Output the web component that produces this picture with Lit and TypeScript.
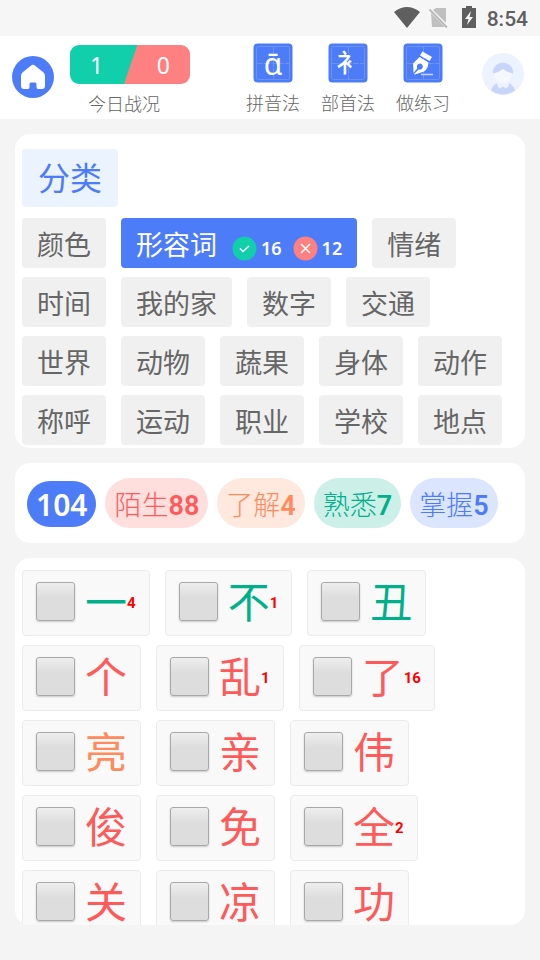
import { LitElement, html, svg, css, nothing } from "lit";
import { customElement } from "lit/decorators.js";
import { classMap } from "lit/directives/class-map.js";

type Category = { name: string; right?: number; wrong?: number };
type Level = "fresh" | "known" | "familiar" | "mastered";
type Word = { char: string; level: Level; misses?: number };

const categories: Category[] = [
  { name: "颜色" }, { name: "形容词", right: 16, wrong: 12 }, { name: "情绪" },
  { name: "时间" }, { name: "我的家" }, { name: "数字" }, { name: "交通" },
  { name: "世界" }, { name: "动物" }, { name: "蔬果" }, { name: "身体" }, { name: "动作" },
  { name: "称呼" }, { name: "运动" }, { name: "职业" }, { name: "学校" }, { name: "地点" },
];

const levels: { name: string; count: number; level: Level }[] = [
  { name: "陌生", count: 88, level: "fresh" },
  { name: "了解", count: 4, level: "known" },
  { name: "熟悉", count: 7, level: "familiar" },
  { name: "掌握", count: 5, level: "mastered" },
];

const words: Word[] = [
  { char: "一", level: "familiar", misses: 4 },
  { char: "不", level: "familiar", misses: 1 },
  { char: "丑", level: "familiar" },
  { char: "个", level: "fresh" },
  { char: "乱", level: "fresh", misses: 1 },
  { char: "了", level: "fresh", misses: 16 },
  { char: "亮", level: "known" },
  { char: "亲", level: "fresh" },
  { char: "伟", level: "fresh" },
  { char: "俊", level: "fresh" },
  { char: "免", level: "fresh" },
  { char: "全", level: "fresh", misses: 2 },
  { char: "关", level: "fresh" },
  { char: "凉", level: "fresh" },
  { char: "功", level: "fresh" },
];

const penIcon = svg`
  <path d="M19.500 8.500 L29 14 L26.500 18 L17 12.500 Z" fill="#fff"/>
  <path fill-rule="evenodd" fill="#fff" d="M16.500 14 L25.500 19.500 Q25 26 21 28.500 L12 31.500 L11 31 L15.700 26.400 A3 3 0 1 0 14.300 25.200 L10.500 30 Q10.500 25 10 20.500 Z"/>
  <path d="M18 31.500 H30" stroke="#c9d6ff" stroke-width="1.500"/>`;

@customElement("app-root")
export class AppRoot extends LitElement {
  static styles = css`
    :host {
      display: flex;
      flex-direction: column;
      height: 100vh;
      box-sizing: border-box;
      padding-bottom: 35px;
      background: #f4f4f4;
      color: #666;
      font-family: Roboto, "Noto Sans CJK SC", sans-serif;
    }
    * { box-sizing: border-box; }
    svg { display: block; }
    button { border: 0; margin: 0; padding: 0; background: none; color: inherit; font: inherit; cursor: pointer; }
    .status {
      display: flex; flex: none; align-items: center; justify-content: flex-end; gap: 10px;
      height: 36px; padding: 2px 12px 0 0; background: #f6f6f6;
      color: #5f5f5f; font-size: 21px; font-weight: 500;
    }
    .status svg { flex: none; margin-bottom: 2px; }
    .header {
      display: flex; flex: none; align-items: flex-start;
      height: 83px; padding: 0 16px 0 12px; background: #fff;
    }
    .home { margin-top: 20px; }
    .today { display: flex; flex-direction: column; align-items: center; margin: 9px 0 0 16px; }
    .score {
      display: flex; align-items: center; justify-content: space-between;
      width: 120px; height: 39px; padding: 0 20px; border-radius: 9px;
      background: linear-gradient(109deg, #11cfab 50%, #ff8080 51%);
      color: #fff; font: 23px "Noto Sans", sans-serif;
    }
    .caption { font-size: 18px; font-weight: 300; line-height: 26px; }
    .today .caption { margin-top: 8px; margin-right: 12px; }
    .tools { display: flex; margin: 7px 32px 0 auto; gap: 21px; }
    .tool { display: flex; flex-direction: column; align-items: center; width: 54px; white-space: nowrap; }
    .tool .caption { margin-top: 8px; }
    .glyph { fill: #fff; font-family: "Noto Sans", "Noto Sans CJK SC", sans-serif; }
    .avatar { margin-top: 17px; }
    .card { flex: none; margin: 15px 15px 0; border-radius: 15px; background: #fff; }
    .categories { padding: 15px 7px 3px; }
    .title {
      display: inline-block; margin: 0 0 11px; padding: 2px 16px 0; border-radius: 4px;
      background: #eaf3ff; color: #4d7cf8; font-size: 32px; font-weight: 400; line-height: 56px;
      vertical-align: top;
    }
    .chips { display: flex; flex-wrap: wrap; gap: 9px 15px; }
    .chip {
      display: flex; align-items: center; height: 50px; padding: 0 15px; border-radius: 4px;
      background: #f0f0f0; font-size: 27px;
    }
    .chip.active { background: #4d7cf8; color: #fff; }
    .tally {
      display: flex; align-items: center; gap: 4px; margin: 10px 0 0 15px;
      font: 600 18px "Noto Sans", sans-serif;
    }
    .tally + .tally { margin-left: 11px; }
    .levels { display: flex; align-items: center; gap: 9px; height: 80px; padding: 0 12px; }
    .level { height: 50px; padding: 0 9px; border-radius: 25px; font-size: 27px; font-weight: 300; white-space: nowrap; }
    .level b { font-weight: 600; }
    .level.total { height: 46px; margin-top: 2px; background: #4d7cf8; color: #fff; font: 600 30px "Noto Sans", sans-serif; }
    .fresh { color: #ff5a5a; }
    .known { color: #ff8a5c; }
    .familiar { color: #00b08b; }
    .mastered { color: #4d7cf8; }
    .level.fresh { background: #ffdede; }
    .level.known { background: #ffe8de; }
    .level.familiar { background: #ccefe8; }
    .level.mastered { background: #dbe5fe; }
    .words {
      display: flex; flex: 1 1 0; flex-wrap: wrap; align-content: flex-start; gap: 9px 15px;
      min-height: 0; padding: 12px 7px 0; overflow: hidden;
    }
    .word {
      display: flex; align-items: center; height: 66px; padding: 0 13px;
      border: 1px solid #ebebeb; border-radius: 4px; background: #f9f9f9;
    }
    .box {
      appearance: none; width: 39px; height: 39px; margin: 0 10px 4px 0;
      border: 1px solid #a8a8a8; border-radius: 3px;
      background: linear-gradient(#eee, #ddd 40%); box-shadow: 0 1px 2px #0003;
    }
    .box:checked { background: #4d7cf8; }
    .char { padding-top: 2px; font-size: 42px; line-height: 60px; }
    .misses { color: #f00; font-size: 15px; font-weight: 700; }
  `;

  private tool(label: string, content: unknown) {
    return html`<button class="tool">
      <svg width="40" height="40" viewBox="0 0 40 40" aria-hidden="true">
        <rect x=".5" y=".5" width="39" height="39" rx="4" fill="#4d7cf8"/>
        <rect x="3.500" y="3.500" width="33" height="33" rx="2" fill="none" stroke="#6c91fa"/>
        <path d="M4 20.500 H36 M20.500 4 V36" stroke="#6c91fa" stroke-dasharray="6 1"/>
        ${content}
      </svg>
      <span class="caption">${label}</span>
    </button>`;
  }

  private category(c: Category) {
    return html`<button class=${classMap({ chip: true, active: c.right !== undefined })}>
      ${c.name}${c.right === undefined ? nothing : html`
        <span class="tally"><svg width="25" height="25" viewBox="0 0 25 25" aria-hidden="true">
          <circle cx="12.500" cy="12.500" r="12" fill="#11cfab"/>
          <path d="M8 12.500 L11 15.500 L17 10" fill="none" stroke="#fff" stroke-width="1.500"/>
        </svg>${c.right}</span>
        <span class="tally"><svg width="25" height="25" viewBox="0 0 25 25" aria-hidden="true">
          <circle cx="12.500" cy="12.500" r="12" fill="#ff8080"/>
          <path d="M8 8 L17 17 M17 8 L8 17" stroke="#fff" stroke-width="1.500"/>
        </svg>${c.wrong}</span>`}
    </button>`;
  }

  render() {
    return html`
      <div class="status">
        <svg width="83" height="24" viewBox="0 0 83 24" aria-hidden="true">
          <path d="M0 6 Q13 -4 26 6 L13 22 Z" fill="#5f5f5f"/>
          <path d="M42 2 H52 V17 L39 4 Z M37 7 L51 21 H38 Z" fill="#c0c0c0"/>
          <path d="M35.500 3.500 L53 21.500" stroke="#b8b8b8" stroke-width="1.800"/>
          <path fill-rule="evenodd" fill="#5f5f5f" d="M72 0 H78 V2 H82 V22 H68 V2 H72 Z M77 5 L71 13 H74.500 L73 19 L79 11 H75.500 Z"/>
        </svg>
        <span>8:54</span>
      </div>
      <header class="header">
        <button class="home" aria-label="首页">
          <svg width="42" height="42" viewBox="0 0 42 42">
            <circle cx="21" cy="21" r="21" fill="#4d7cf8"/>
            <path fill="#fff" d="M18.500 10 Q21 7.500 23.500 10 L31 16 Q33 17.500 33 20 V30 Q33 33 30 33 H26 Q24.500 33 24.500 31 V28 Q24.500 26.500 23 26.500 H19 Q17.500 26.500 17.500 28 V31 Q17.500 33 16 33 H12 Q9 33 9 30 V20 Q9 17.500 11 16 Z"/>
          </svg>
        </button>
        <div class="today">
          <div class="score"><span>1</span><span>0</span></div>
          <span class="caption">今日战况</span>
        </div>
        <nav class="tools">
          ${this.tool("拼音法", svg`<text class="glyph" x="20" y="32" font-size="30" text-anchor="middle">ɑ̄</text>`)}
          ${this.tool("部首法", svg`<text class="glyph" x="21" y="29" font-size="25" font-weight="500" text-anchor="middle">衤</text>`)}
          ${this.tool("做练习", penIcon)}
        </nav>
        <button class="avatar" aria-label="我的">
          <svg width="42" height="42" viewBox="0 0 42 42">
            <circle cx="21" cy="21" r="21" fill="#edf2ff"/>
            <ellipse cx="21" cy="21" rx="9" ry="9" fill="#f6f8ff"/>
            <path fill="#c8d5fb" d="M11 20.500 C10 6 32 6 31 20.500 Q25 19.500 21 16 Q17 19.500 11 20.500 Z"/>
            <path fill="#c8d5fb" d="M9 37.500 Q10 33 15 30 Q15 34 18 35.500 L21 33.500 L24 35.500 Q27 34 27 30 Q32 33 33 37.500 Q21 45.500 9 37.500 Z"/>
          </svg>
        </button>
      </header>
      <section class="card categories">
        <h2 class="title">分类</h2>
        <div class="chips">${categories.map((c) => this.category(c))}</div>
      </section>
      <section class="card levels">
        <button class="level total">104</button>
        ${levels.map((l) => html`<button class="level ${l.level}">${l.name}<b>${l.count}</b></button>`)}
      </section>
      <section class="card words">
        ${words.map((w) => html`<label class="word">
          <input class="box" type="checkbox">
          <span class="char ${w.level}">${w.char}</span>${w.misses ? html`<span class="misses">${w.misses}</span>` : nothing}
        </label>`)}
      </section>`;
  }
}
